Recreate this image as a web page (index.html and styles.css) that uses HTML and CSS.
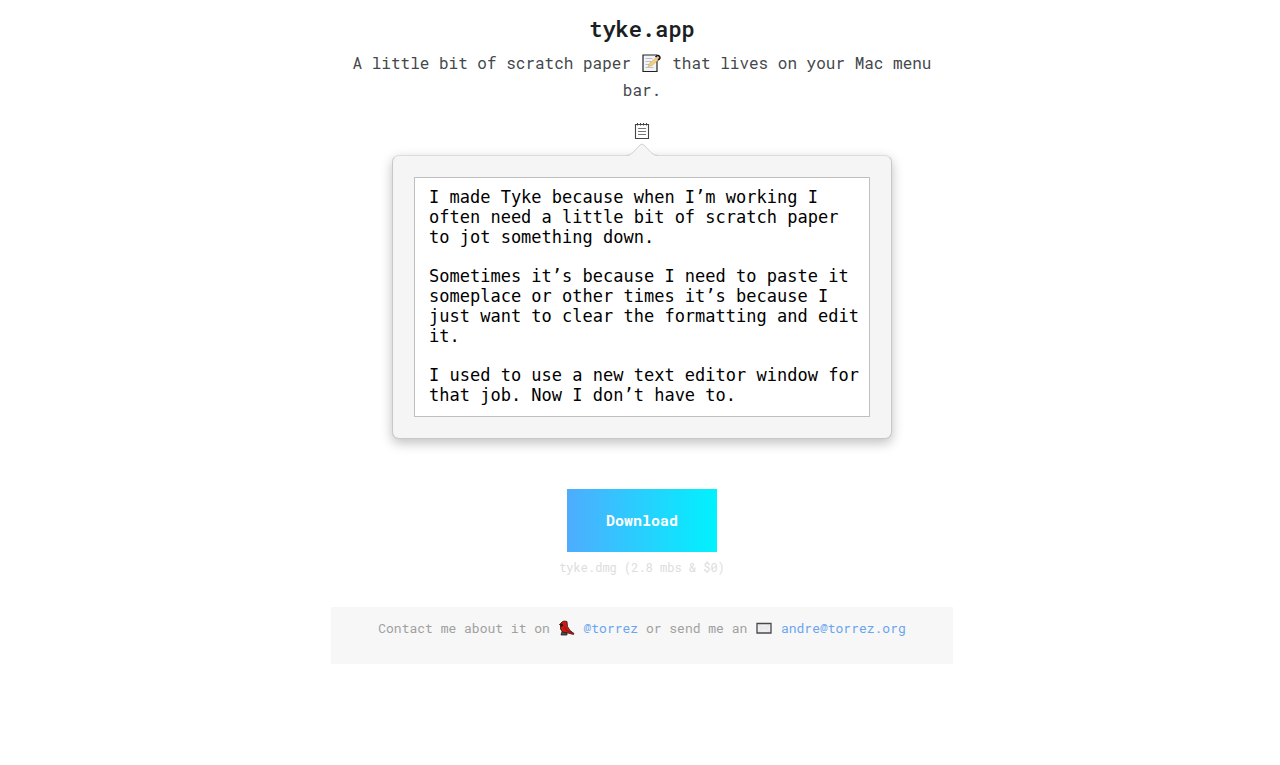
FILE: index.html
```
<!DOCTYPE html>
<html lang="en">
<head>
  <meta charset="UTF-8">
  <meta name="viewport" content="width=device-width, initial-scale=1.0">
  <title>tyke.app</title>
  <link rel="stylesheet" href="styles.css">
</head>
<body>
  <div class="page">
    <header>
      <h1>tyke.app</h1>
      <p class="tagline">A little bit of scratch paper
        <svg class="memo" viewBox="0 0 20 20" role="img" aria-label="memo">
          <path d="M1 2h14v16.500H1z" fill="#f1f3f6" stroke="#222" stroke-width="1.2"/>
          <path d="M3.500 5.500h7M3.500 8.500h6M3.500 11.500h4M3.500 14.500h8" stroke="#b9c0ca" stroke-width="1"/>
          <path d="M6 13.500l2-3.500 7-6 2 2-7 6.500z" fill="#f6d07a" stroke="#c29a4a" stroke-width=".5"/>
          <path d="M13.500 4q2.500-2.500 4-.5t-1.500 3.500" fill="#e5bcb0" stroke="#111" stroke-width="1.500"/>
        </svg>
        that lives on your Mac menu bar.</p>
    </header>

    <div class="demo">
      <svg class="menu-icon" viewBox="0 0 16 18" aria-hidden="true">
        <path d="M1.500 2.500h13v14h-13z" fill="#fff" stroke="#444" stroke-width="1.100"/>
        <path d="M3.500 1v2.500M6.500 1v2.500M9.500 1v2.500M12.500 1v2.500" stroke="#444"/>
        <path d="M4 6.500h8M4 9.500h8M4 12.500h8" stroke="#777"/>
      </svg>
      <div class="popover">
        <svg class="arrow" viewBox="0 0 32 14" aria-hidden="true">
          <path d="M0 13Q4 13 7 9.500L14 2Q16 0 18 2L25 9.500Q28 13 32 13V14H0z" fill="#f5f5f5"/>
          <path d="M0 12.500Q4 12.500 7 9.500L14 2Q16 0 18 2L25 9.500Q28 12.500 32 12.500" fill="none" stroke="#d2d2d2"/>
        </svg>
        <div class="note">
          <p>I made Tyke because when I’m working I often need a little bit of scratch paper to jot something down.</p>
          <p>Sometimes it’s because I need to paste it someplace or other times it’s because I just want to clear the formatting and edit it.</p>
          <p>I used to use a new text editor window for that job. Now I don’t have to.</p>
        </div>
      </div>
    </div>

    <div class="download">
      <a class="button" href="#">Download</a>
      <p class="file">tyke.dmg (2.8 mbs &amp; $0)</p>
    </div>

    <footer>
      Contact me about it on
      <svg class="emoji" viewBox="0 0 16 16" role="img" aria-label="bird">
        <path d="M3 11.500l-1 3.500h6v-3z" fill="#44515a" stroke="#222" stroke-width=".8"/>
        <path d="M.5 4.500L3 2 5 1l3 .5.500 5L11 10.500l4 3-.5 1-5.500-1.500L3.500 12 1.500 9V5.500z" fill="#c81d10" stroke="#3a1512" stroke-width=".8"/>
        <path d="M.5 4.500L3 3.500l1.500 2L2 7z" fill="#2c1815"/>
        <path d="M5.500 6.500l2 4 6 2.500" fill="none" stroke="#7b1712" stroke-width=".8"/>
      </svg>
      <a href="#">@torrez</a> or send me an
      <svg class="emoji" viewBox="0 0 16 16" role="img" aria-label="email">
        <path d="M1 3.500h14v9.500H1z" fill="#eeeef0" stroke="#49494d" stroke-width="1.300"/>
        <path d="M2 4.500l4.500 3.500h3L14 4.500M2 12l4-3.500M14 12l-4-3.500" fill="none" stroke="#dcdce0" stroke-width=".7"/>
      </svg>
      <a href="mailto:andre@torrez.org">andre@torrez.org</a>
    </footer>
  </div>
</body>
</html>
```
FILE: styles.css
```
* {
  box-sizing: border-box;
}
body {
  margin: 0;
  padding: 15px 0 0 4px;
  background: #fff;
  color: #1b1f23;
  font-family: "Roboto Mono", "Liberation Mono", monospace;
  font-size: 16px;
  text-align: center;
}
p {
  margin: 0;
}
a {
  color: #69a5f0;
  text-decoration: none;
}
.page {
  max-width: 622px;
  margin: 0 auto;
}
h1 {
  margin: 0 0 6px;
  font-size: 22px;
  font-weight: 600;
  line-height: 28px;
}
.tagline {
  padding: 0 20px;
  line-height: 27px;
  color: #44484c;
}
.memo {
  width: 20px;
  height: 20px;
  margin: 0 1px;
  vertical-align: -4px;
}

/* menu bar icon with the popover hanging from it */
.demo {
  max-width: 500px;
  margin: 19px auto 0;
}
.menu-icon {
  display: block;
  width: 16px;
  height: 18px;
  margin: 0 auto 15px;
}
.popover {
  position: relative;
  padding: 21px;
  background: #f5f5f5;
  border: 1px solid #c8c8c8;
  border-top-color: #dcdcdc;
  border-radius: 7px;
  box-shadow: 0 4px 12px rgba(0, 0, 0, 0.25);
}
.arrow {
  position: absolute;
  top: -13px;
  left: 50%;
  width: 32px;
  height: 14px;
  margin-left: -16px;
}
.note {
  padding: 9px 8px 11px 14px;
  background: #fff;
  border: 1px solid #bfbfbf;
  color: #000;
  font-family: "DejaVu Sans Mono", monospace;
  font-size: 17px;
  line-height: 20px;
  text-align: left;
}
.note p + p {
  margin-top: 19px;
}

.download {
  margin-top: 50px;
}
.button {
  display: inline-block;
  width: 150px;
  background: linear-gradient(to right, #4facfe, #00f2fe);
  color: #fff;
  font-size: 15px;
  font-weight: bold;
  line-height: 63px;
}
.file {
  margin-top: 5px;
  color: #ddd;
  font-size: 12px;
  line-height: 20px;
}

footer {
  margin-top: 30px;
  padding: 11px 20px 26px;
  background: #f7f7f7;
  color: #a0a0a0;
  font-size: 13px;
  line-height: 20px;
}
.emoji {
  width: 16px;
  height: 16px;
  margin: 0 1px;
  vertical-align: -3px;
}
```
